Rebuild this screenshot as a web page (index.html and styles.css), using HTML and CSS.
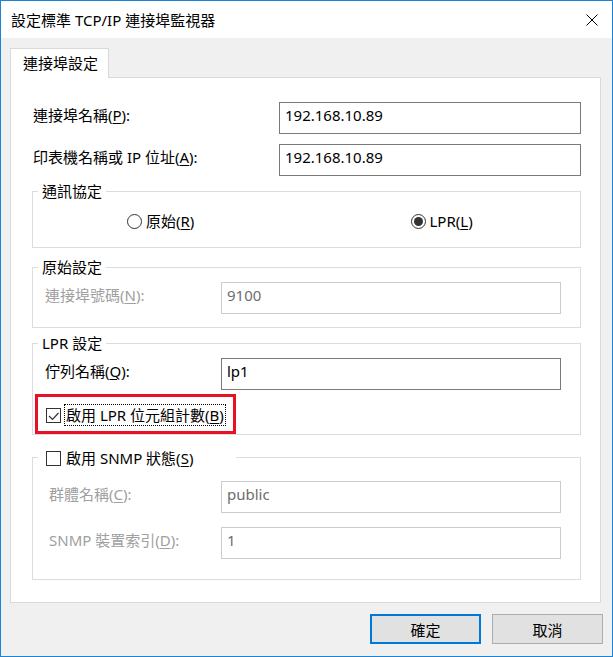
FILE: index.html
```html
<!DOCTYPE html>
<html lang="zh-Hant">
<head>
<meta charset="UTF-8">
<title>設定標準 TCP/IP 連接埠監視器</title>
<link rel="stylesheet" href="styles.css">
</head>
<body>
<div class="window">
  <div class="titlebar">
    <span class="title">設定標準 TCP/IP 連接埠監視器</span>
    <svg class="close" viewBox="0 0 12 12"><path d="M0.5 0.5 L11.5 11.5 M11.5 0.5 L0.5 11.5" stroke="#000" stroke-width="1" fill="none"/></svg>
  </div>
  <div class="dialog">
    <div class="tabs">
      <div class="tab">連接埠設定</div>
    </div>
    <div class="panel">
      <div class="field field-wide">
        <label>連接埠名稱(<u>P</u>):</label>
        <div class="input">192.168.10.89</div>
      </div>
      <div class="field field-wide">
        <label>印表機名稱或 IP 位址(<u>A</u>):</label>
        <div class="input">192.168.10.89</div>
      </div>

      <fieldset class="group group-protocol">
        <legend>通訊協定</legend>
        <div class="group-body radios">
          <div class="radio radio-raw"><span class="radio-dot"></span><span>原始(<u>R</u>)</span></div>
          <div class="radio radio-lpr radio-on"><span class="radio-dot"></span><span>LPR(<u>L</u>)</span></div>
        </div>
      </fieldset>

      <fieldset class="group group-raw disabled">
        <legend>原始設定</legend>
        <div class="group-body">
          <div class="field field-group">
            <label>連接埠號碼(<u>N</u>):</label>
            <div class="input">9100</div>
          </div>
        </div>
      </fieldset>

      <fieldset class="group group-lpr">
        <legend>LPR 設定</legend>
        <div class="group-body">
          <div class="field field-group">
            <label>佇列名稱(<u>Q</u>):</label>
            <div class="input">lp1</div>
          </div>
          <div class="check-row check-row-lpr">
            <span class="check">
              <svg viewBox="0 0 13 13"><polyline points="2,7 5.5,10.5 11.5,4" stroke="#333" stroke-width="1.2" fill="none"/></svg>
            </span>
            <span class="check-text focused">啟用 LPR 位元組計數(<u>B</u>)</span>
            <span class="highlight"></span>
          </div>
        </div>
      </fieldset>

      <fieldset class="group group-snmp disabled">
        <legend>
          <span class="check-row">
            <span class="check"></span>
            <span class="check-text">啟用 SNMP 狀態(<u>S</u>)</span>
          </span>
        </legend>
        <div class="group-body">
          <div class="field field-group">
            <label>群體名稱(<u>C</u>):</label>
            <div class="input">public</div>
          </div>
          <div class="field field-group">
            <label>SNMP 裝置索引(<u>D</u>):</label>
            <div class="input">1</div>
          </div>
        </div>
      </fieldset>
    </div>
    <div class="buttons">
      <button class="btn btn-default">確定</button>
      <button class="btn">取消</button>
    </div>
  </div>
</div>
</body>
</html>
```

FILE: styles.css
```css
* {
    box-sizing: border-box;
}

body {
    margin: 0;
    font-family: "Noto Sans", "Noto Sans CJK TC", sans-serif;
    font-size: 15px;
    color: #000;
    background: #fff;
}

u {
    text-decoration-thickness: 1px;
    text-underline-offset: 2px;
}

.window {
    width: 613px;
    height: 657px;
    border: 1px solid #1883d7;
    display: flex;
    flex-direction: column;
}

.titlebar {
    height: 37px;
    flex: none;
    background: #fff;
    display: flex;
    align-items: center;
    justify-content: space-between;
    padding: 0 14px 0 10px;
}

.title {
    line-height: 20px;
}

.close {
    width: 12px;
    height: 12px;
}

.dialog {
    flex: 1;
    background: #f0f0f0;
    padding: 10px 9px 0 9px;
}

/* tab strip */
.tabs {
    display: flex;
}

.tab {
    position: relative;
    z-index: 1;
    width: 99px;
    height: 30px;
    margin-bottom: -1px;
    padding-left: 12px;
    line-height: 28px;
    background: #fff;
    border: 1px solid #d9d9d9;
    border-bottom: none;
}

.panel {
    background: #fff;
    border: 1px solid #d9d9d9;
    margin-right: 2px;
    padding: 24px 19px 22px 21px;
}

/* label + textbox rows */
.field {
    display: grid;
    align-items: center;
    height: 32px;
}

.field label {
    line-height: 20px;
    margin-bottom: 6px; /* windows labels sit a little high */
}

.field-wide {
    grid-template-columns: 246px 302px;
    padding-left: 1px;
}

.field-wide + .field-wide {
    margin-top: 10px;
}

.field-group {
    grid-template-columns: 176px 340px;
}

.field-group + .field-group {
    margin-top: 14px;
}

.input {
    height: 32px;
    border: 1px solid #7a7a7a;
    padding-left: 5px;
    line-height: 24px;
    background: #fff;
}

/* group boxes */
.group {
    margin: 0;
    padding: 0;
    min-width: 0;
    border: 1px solid #dcdcdc;
}

.group legend {
    margin-left: 5px;
    padding: 0 4px;
    line-height: 20px;
}

.group-body {
    padding: 5px 19px 13px 12px;
}

.group-protocol {
    margin-top: 5px;
}

.group-protocol .group-body {
    padding: 10px 0 16px 0;
}

.group-raw {
    margin-top: 9px;
}

.group-lpr {
    margin-top: 5px;
}

.group-lpr .group-body {
    padding-bottom: 8px;
}

.group-snmp {
    margin-top: 10px;
}

.group-snmp legend {
    width: 198px;
    padding: 2px 0 0 7px;
}

.group-snmp .group-body {
    padding: 12px 19px 20px 12px;
}

.group-snmp .field label {
    padding-left: 4px;
}

.disabled .field label {
    color: #a0a0a0;
}

.disabled .input {
    border-color: #cccccc;
    color: #6d6d6d;
}

/* radio buttons */
.radios {
    display: grid;
    grid-template-columns: 1fr 1fr;
}

.radio {
    display: flex;
    align-items: center;
    gap: 4px;
    height: 20px;
    line-height: 20px;
}

.radio-raw {
    margin-left: 94px;
}

.radio-lpr {
    margin-left: 104px;
}

.radio-dot {
    width: 15px;
    height: 15px;
    border: 1px solid #333;
    border-radius: 50%;
    background: #fff;
    display: flex;
    align-items: center;
    justify-content: center;
}

.radio-on .radio-dot::after {
    content: "";
    width: 9px;
    height: 9px;
    border-radius: 50%;
    background: #333;
}

/* check boxes */
.check-row {
    position: relative;
    display: flex;
    align-items: center;
    height: 22px;
}

.check-row-lpr {
    margin-top: 14px;
}

.check {
    flex: none;
    width: 15px;
    height: 15px;
    margin-left: 1px;
    border: 1px solid #333;
    background: #fff;
}

.check svg {
    display: block;
    width: 13px;
    height: 13px;
}

.check-text {
    margin-left: 3px;
    padding: 0 1px;
    line-height: 20px;
    border: 1px dotted transparent;
}

.check-text.focused {
    border-color: #000;
}

.highlight {
    position: absolute;
    left: -10px;
    top: -10px;
    width: 201px;
    height: 40px;
    border: 3px solid #e81123;
}

/* bottom buttons */
.buttons {
    display: flex;
    justify-content: flex-end;
    gap: 11px;
    margin-top: 11px;
}

.btn {
    width: 111px;
    height: 30px;
    font-family: inherit;
    font-size: 15px;
    color: #000;
    background: #e1e1e1;
    border: 1px solid #adadad;
    padding: 0;
}

.btn-default {
    border: 2px solid #0078d7;
}
```
